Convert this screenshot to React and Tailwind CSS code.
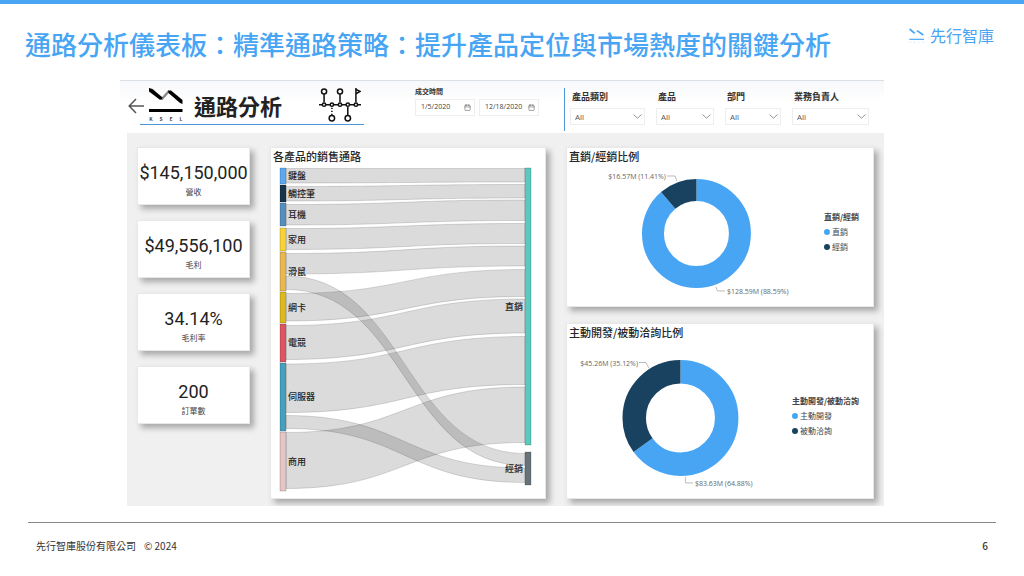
import { useState } from "react";
import { Calendar } from "lucide-react";

const SOURCES = [
  { name: "鍵盤", top: 168, bottom: 184, color: "#5aa9f0" },
  { name: "觸控筆", top: 185, bottom: 202, color: "#16344a" },
  { name: "耳機", top: 203, bottom: 226, color: "#568fbd" },
  { name: "家用", top: 228, bottom: 251, color: "#f8d335" },
  { name: "滑鼠", top: 252, bottom: 291, color: "#e8b74f" },
  { name: "網卡", top: 292, bottom: 323, color: "#dcb91c" },
  { name: "電競", top: 324, bottom: 362, color: "#dd5562" },
  { name: "伺服器", top: 363, bottom: 431, color: "#469fbd" },
  { name: "商用", top: 432, bottom: 491, color: "#e6c5c6" },
];

const TARGETS = [
  { name: "直銷", top: 168, bottom: 445, color: "#5bc9bd" },
  { name: "經銷", top: 452, bottom: 485, color: "#667378" },
];

// [left top, left bottom, right top, right bottom]
const LINKS = [
  [168.5, 183, 168.5, 182],
  [186.5, 201, 184.5, 198],
  [204.5, 225, 200, 220.5],
  [228.5, 249.5, 223.5, 243.5],
  [253.5, 274, 246, 266],
  [293.5, 321, 269.5, 296.5],
  [325.5, 359.5, 299, 333],
  [364, 412.5, 336.5, 384.5],
  [432.5, 488.5, 387, 442.5],
  [276, 289.5, 453.5, 465.5],
  [415.5, 428.5, 468, 482.5],
];

const KPIS = [
  { value: "$145,150,000", label: "營收" },
  { value: "$49,556,100", label: "毛利" },
  { value: "34.14%", label: "毛利率" },
  { value: "200", label: "訂單數" },
];

const FILTERS = [
  { id: "category", label: "產品類別", width: "w-[75px]" },
  { id: "product", label: "產品", width: "w-[58px]" },
  { id: "department", label: "部門", width: "w-[56px]" },
  { id: "owner", label: "業務負責人", width: "w-[77px]" },
];

const CARD = "bg-white border border-[#e8e8e8] shadow-[4px_4px_6px_rgba(0,0,0,0.3)]";

function linkPath([a, b, c, d]) {
  return `M286 ${a}C405 ${a} 405 ${c} 525 ${c}V${d}C405 ${d} 405 ${b} 286 ${b}Z`;
}

function Sankey() {
  return (
    <svg viewBox="271 166 274 332" className="block w-full" role="img" aria-label="各產品的銷售通路">
      {LINKS.map((l) => (
        <path
          key={l.join()}
          d={linkPath(l)}
          fill="#000"
          fillOpacity="0.14"
          stroke="#000"
          strokeOpacity="0.2"
          strokeWidth="0.7"
        />
      ))}
      {SOURCES.map((n) => (
        <g key={n.name}>
          <rect x="280" y={n.top} width="6" height={n.bottom - n.top} fill={n.color} stroke="#000" strokeOpacity="0.3" strokeWidth="0.6" />
          <text x="288" y={(n.top + n.bottom) / 2} dy="3" className="text-[9px] font-medium" fill="#222">
            {n.name}
          </text>
        </g>
      ))}
      {TARGETS.map((n) => (
        <g key={n.name}>
          <rect x="525" y={n.top} width="6" height={n.bottom - n.top} fill={n.color} stroke="#000" strokeOpacity="0.3" strokeWidth="0.6" />
          <text x="523" y={(n.top + n.bottom) / 2} dy="3" textAnchor="end" className="text-[9px] font-medium" fill="#222">
            {n.name}
          </text>
        </g>
      ))}
    </svg>
  );
}

// ring: blue share runs clockwise from 12 o'clock, navy takes the rest
function Ring({ cx, cy, outer, inner, share }) {
  const r = (outer + inner) / 2;
  const len = 2 * Math.PI * r;
  return (
    <g fill="none" strokeWidth={outer - inner} transform={`rotate(-90 ${cx} ${cy})`}>
      <circle cx={cx} cy={cy} r={r} stroke="#47a5f4" strokeDasharray={`${len * share} ${len}`} />
      <circle
        cx={cx}
        cy={cy}
        r={r}
        stroke="#18425f"
        strokeDasharray={`${len * (1 - share)} ${len}`}
        strokeDashoffset={-len * share}
      />
    </g>
  );
}

function Legend({ title, items }) {
  return (
    <div className="shrink-0 pb-2 mr-[14px] text-[8px] leading-[15px] text-[#444]">
      <p className="font-bold">{title}</p>
      <ul>
        {items.map((item, i) => (
          <li key={item} className="flex items-center gap-[2px]">
            <span className={`size-[6px] rounded-full ${i === 0 ? "bg-[#47a5f4]" : "bg-[#18425f]"}`} />
            {item}
          </li>
        ))}
      </ul>
    </div>
  );
}

function CardTitle({ children }) {
  return (
    <h3 className="pl-[2px] h-[18px] text-[11px] leading-[16px] font-medium text-[#252525]">
      {children}
    </h3>
  );
}

function BrandMark() {
  return (
    <svg width="34" height="34" viewBox="0 0 34 34" aria-hidden="true">
      <path d="M12.5 11.5L20 3" stroke="#888" strokeWidth="2.4" />
      <path d="M0 0L3.5 1L13.5 9.5L12.5 11.8L10.5 11.6L0 3.6Z" fill="#000" />
      <path d="M19 2.4L22 2.6L33.5 12V16L31 15L19.5 5Z" fill="#000" />
      <path d="M0 22.5H33.5" stroke="#000" strokeWidth="3" />
      <g className="text-[5px] font-bold" fill="#444" textAnchor="middle">
        <text x="2" y="33">K</text>
        <text x="12" y="33">S</text>
        <text x="22" y="33">E</text>
        <text x="32" y="33">L</text>
      </g>
    </svg>
  );
}

function TimelineIcon() {
  return (
    <svg width="42" height="34" viewBox="0 0 124 100" fill="none" stroke="#111" strokeWidth="4.5" aria-hidden="true">
      <path d="M0 49H10M20 49H33M43 49H57M67 49H80M90 49H104M114 49H124" />
      {[15, 38, 62, 85, 109].map((x) => (
        <circle key={x} cx={x} cy="49" r="5" />
      ))}
      <circle cx="15" cy="10" r="7.5" />
      <circle cx="62" cy="10" r="7.5" />
      <path d="M15 18V42M62 18V42M109 0V42M109 4L121 10L109 17" />
      <circle cx="38" cy="89" r="8" />
      <circle cx="85" cy="89" r="8" />
      <path d="M85 56V80" />
      <path d="M38 58V80" strokeDasharray="4 5" />
    </svg>
  );
}

function DateBox({ id, label, initial }) {
  const [value, setValue] = useState(initial);
  return (
    <div className="flex items-center w-[60px] h-[17px] border border-[#eee] bg-white pl-[5px] pr-[3px]">
      <input
        id={id}
        aria-label={label}
        value={value}
        onChange={(e) => setValue(e.target.value)}
        className="min-w-0 flex-1 font-['Open_Sans'] text-[7px] text-[#444] outline-none"
      />
      <Calendar size={7} className="shrink-0 text-[#666]" />
    </div>
  );
}

function Filter({ id, label, width }) {
  return (
    <div className={width}>
      <label htmlFor={id} className="block pl-[2px] text-[9px] leading-[18px] font-bold text-[#333]">
        {label}
      </label>
      <div className="relative mt-[2px]">
        <select
          id={id}
          className="block w-full h-[17px] appearance-none border border-[#eee] bg-white pl-[4px] font-['Open_Sans'] text-[8px] text-[#555] outline-none"
        >
          <option>All</option>
        </select>
        <svg className="absolute right-[3px] top-[6px] pointer-events-none" width="9" height="5" viewBox="0 0 9 5" fill="none" stroke="#777" strokeWidth="0.8">
          <path d="M0.5 0.5L4.5 4.2L8.5 0.5" />
        </svg>
      </div>
    </div>
  );
}

export default function App() {
  return (
    <div className="min-h-screen bg-white border-t-4 border-[#47a5f4] font-['Noto_Sans_CJK_TC',sans-serif]">

      {/* SLIDE TITLE */}
      <header className="flex items-start justify-between pt-[22px] pb-[18px] pl-[25px] pr-[30px]">
        <h1 className="text-[26px] leading-[36px] font-medium text-[#47a5f4]">
          通路分析儀表板：精準通路策略：提升產品定位與市場熱度的關鍵分析
        </h1>
        <div className="flex items-center gap-[6px] shrink-0 pt-[1px] text-[16px] leading-[16px] text-[#47a5f4]">
          <svg width="15" height="15" viewBox="0 0 45 45" fill="none" stroke="currentColor" aria-hidden="true">
            <path d="M2 3L17 16M24 8L43 21" strokeWidth="5" />
            <path d="M17 16L24 8" strokeWidth="1.5" opacity="0.5" />
            <path d="M1 34H45" strokeWidth="3.5" />
            <path d="M2 43H44" strokeWidth="3" strokeDasharray="3 10" opacity="0.35" />
          </svg>
          先行智庫
        </div>
      </header>

      {/* DASHBOARD */}
      <main className="ml-[120px] mr-[140px]">
        <div className="flex items-start h-[53px] pl-[8px] pr-[15px] border-t border-[#dcdfe6] bg-linear-to-b from-[#f7f8fa] to-white to-40%">
          <button type="button" aria-label="返回" className="-mr-[5px] mt-[17px]">
            <svg width="17" height="16" viewBox="0 0 17 16" fill="none" stroke="#555" strokeWidth="1.5">
              <path d="M16 8H1.5M8 1L1.2 8L8 15" />
            </svg>
          </button>
          <div className="flex items-center h-[44px] pt-[7px] pb-[2px] pl-[9px] pr-[3px] border-b border-[#4a97da]">
            <BrandMark />
            <h2 className="ml-[11px] mr-[37px] text-[22px] leading-[30px] font-bold text-[#222]">通路分析</h2>
            <TimelineIcon />
          </div>

          <div className="ml-auto mr-[25px] pt-[5px]">
            <label htmlFor="from" className="block text-[7px] leading-[10px] font-bold text-[#333]">
              成交時間
            </label>
            <div className="flex gap-1 mt-[3px]">
              <DateBox id="from" label="成交時間 開始" initial="1/5/2020" />
              <DateBox id="to" label="成交時間 結束" initial="12/18/2020" />
            </div>
          </div>

          <div className="flex gap-[11px] h-[43px] mt-[7px] pl-[5px] border-l border-[#4a97da]">
            {FILTERS.map((f) => (
              <Filter key={f.id} {...f} />
            ))}
          </div>
        </div>

        <div className="ml-[7px] overflow-hidden bg-[#f0f0f0] px-[10px] pt-[14px] pb-[7px] grid grid-cols-[113fr_276fr_308fr] gap-[20px] items-start">

          {/* KPI */}
          <section className="flex flex-col gap-[15px] min-w-0">
            {KPIS.map((k) => (
              <div key={k.label} className={`${CARD} h-[58px] pt-[14px] text-center`}>
                <p className="font-['Roboto'] text-[18px] leading-[22px] text-[#222]">{k.value}</p>
                <p className="mt-[2px] text-[8px] leading-[12px] text-[#444]">{k.label}</p>
              </div>
            ))}
          </section>

          {/* SANKEY */}
          <section className={`${CARD} min-w-0`}>
            <CardTitle>各產品的銷售通路</CardTitle>
            <Sankey />
          </section>

          {/* DONUTS */}
          <section className="flex flex-col gap-[16px] min-w-0">
            <div className={CARD}>
              <CardTitle>直銷/經銷比例</CardTitle>
              <div className="flex items-center">
                <svg viewBox="567 166 257 140" className="block min-w-0 flex-1" role="img" aria-label="直銷/經銷比例">
                  <Ring cx={696.5} cy={233.5} outer={54.5} inner={32.5} share={0.8859} />
                  <path d="M667 176H675L677 181M716 287L717.5 291H725" fill="none" stroke="#aaa" strokeWidth="0.8" />
                  <g className="font-['Open_Sans'] text-[7px]" fill="#666">
                    <text x="666" y="179" textAnchor="end">$16.57M (11.41%)</text>
                    <text x="727" y="294">$128.59M (88.59%)</text>
                  </g>
                </svg>
                <Legend title="直銷/經銷" items={["直銷", "經銷"]} />
              </div>
            </div>

            <div className={CARD}>
              <CardTitle>主動開發/被動洽詢比例</CardTitle>
              <div className="flex items-center">
                <svg viewBox="567 342 225 156" className="block min-w-0 flex-1" role="img" aria-label="主動開發/被動洽詢比例">
                  <Ring cx={680.5} cy={418} outer={58} inner={34.5} share={0.6488} />
                  <path d="M639 362.5H646L649 368M685.5 477V483H693" fill="none" stroke="#aaa" strokeWidth="0.8" />
                  <g className="font-['Open_Sans'] text-[7px]" fill="#666">
                    <text x="638" y="366" textAnchor="end">$45.26M (35.12%)</text>
                    <text x="695" y="486">$83.63M (64.88%)</text>
                  </g>
                </svg>
                <Legend title="主動開發/被動洽詢" items={["主動開發", "被動洽詢"]} />
              </div>
            </div>
          </section>
        </div>
      </main>

      {/* FOOTER */}
      <footer className="flex justify-between mx-[28px] mt-[16px] pt-[14px] pl-2 pr-[8px] border-t border-[#888] text-[10px] leading-[18px] text-[#333]">
        <p className="flex gap-[8px]">
          <span>先行智庫股份有限公司</span>
          <span>© 2024</span>
        </p>
        <p className="font-medium">6</p>
      </footer>
    </div>
  );
}
